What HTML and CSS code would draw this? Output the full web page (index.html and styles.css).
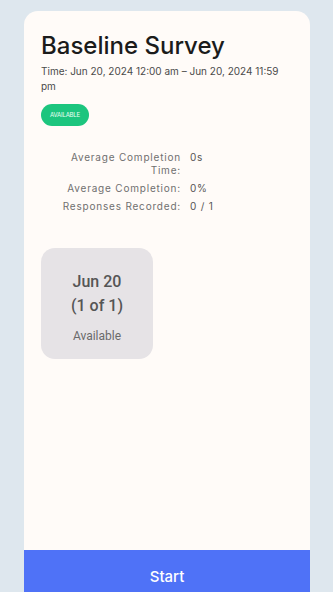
FILE: index.html
```html
<!DOCTYPE html>
<html lang="en">
  <head>
    <meta charset="UTF-8" />
    <meta name="viewport" content="width=device-width, initial-scale=1.0" />
    <title>Baseline Survey</title>
    <link rel="stylesheet" href="styles.css">
  </head>
  <body>
    <div class="card">
      <div class="content">
        <h1>Baseline Survey</h1>
        <p class="time">Time: Jun 20, 2024 12:00 am – Jun 20, 2024 11:59 pm</p>
        <span class="badge">AVAILABLE</span>

        <div class="stats">
          <div class="label">Average Completion Time:</div>
          <div class="value">0s</div>
          <div class="label">Average Completion:</div>
          <div class="value">0%</div>
          <div class="label">Responses Recorded:</div>
          <div class="value">0 / 1</div>
        </div>

        <div class="tile">
          <div class="tile-date">Jun 20</div>
          <div class="tile-count">(1 of 1)</div>
          <div class="tile-status">Available</div>
        </div>
      </div>
      <button class="start">Start</button>
    </div>
  </body>
</html>
```

FILE: styles.css
```css
body {
  margin: 0;
  padding: 0;
  background-color: #dee7ee;
  font-family: Inter, "Noto Sans", sans-serif;
}

.card {
  margin: 11px 23px 0 24px;
  height: 581px;
  background-color: #fffbf8;
  border-radius: 14px 14px 0 0;
  display: flex;
  flex-direction: column;
  overflow: hidden;
}

.content {
  flex: 1;
  padding: 0 17px;
}

h1 {
  margin: 20px 0 0;
  font-size: 24px;
  line-height: 30px;
  font-weight: 500;
  color: #1b1b1b;
}

.time {
  margin: 3px 0 0;
  font-size: 10px;
  line-height: 15px;
  color: #4a4a4a;
}

.badge {
  display: inline-block;
  margin-top: 10px;
  width: 48px;
  height: 22px;
  line-height: 22px;
  border-radius: 11px;
  background-color: #1cc57e;
  color: #e9fff4;
  font-size: 6px;
  text-align: center;
  letter-spacing: -0.2px;
}

.stats {
  display: grid;
  grid-template-columns: 120px auto;
  column-gap: 9px;
  row-gap: 5px;
  margin: 25px 0 0 20px;
  font-size: 10px;
  line-height: 13px;
  color: #6f6f6f;
  letter-spacing: 0.8px;
}

.label {
  text-align: right;
}

.value {
  color: #555;
}

.tile {
  margin-top: 35px;
  width: 112px;
  height: 111px;
  border-radius: 14px;
  background-color: #e6e3e6;
  font-family: Roboto, sans-serif;
  text-align: center;
  color: #555;
}

.tile-date {
  padding-top: 23px;
  font-size: 16px;
  line-height: 22px;
  font-weight: 500;
}

.tile-count {
  margin-top: 2px;
  font-size: 16px;
  line-height: 22px;
  font-weight: 500;
}

.tile-status {
  margin-top: 11px;
  font-size: 12px;
  line-height: 16px;
  color: #6a6a6a;
}

.start {
  height: 42px;
  border: none;
  background-color: #4f72f7;
  color: #ffffff;
  font-family: Inter, sans-serif;
  font-size: 15px;
  font-weight: 500;
  padding: 10px 0 0;
}
```
